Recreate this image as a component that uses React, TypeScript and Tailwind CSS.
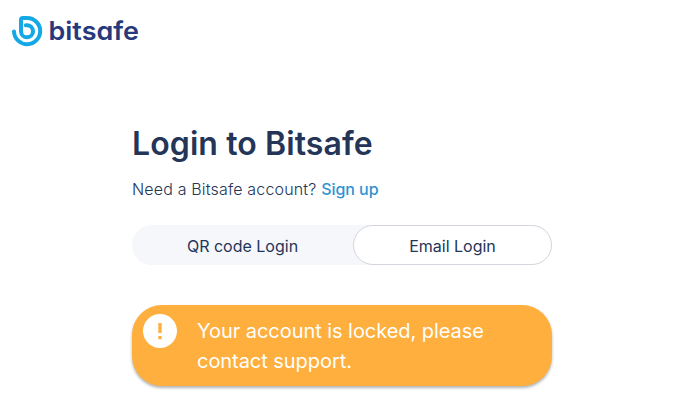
const Logo = () => {
  return (
    <div className="flex items-center gap-[5px] h-8">
      <svg width="33" height="32" viewBox="0 0 33 32" fill="none" stroke="#14a9e6" strokeWidth="4" strokeLinecap="round" strokeLinejoin="round">
        <path d="M3 16.5A13.1 13.1 0 1 0 16 3H12Q10 3 10 5V16.5A6 6 0 1 0 16 10.3H14.8" />
      </svg>
      <svg className="overflow-visible" width="92" height="32" viewBox="0 0 92 32">
        <text
          className="[font-feature-settings:'cv11']"
          x="-0.5"
          y="25"
          textLength="90.5"
          lengthAdjust="spacingAndGlyphs"
          fill="#27397c"
          fontFamily="Inter, sans-serif"
          fontWeight="600"
          fontSize="25"
        >
          bitsafe
        </text>
      </svg>
    </div>
  );
};

const LoginTabs = () => {
  return (
    <div className="mt-6 flex h-10 rounded-full bg-[#f5f7fb] text-base">
      <button className="w-[221px] pt-0.5">QR code Login</button>
      <button className="w-[199px] pt-0.5 rounded-full border border-[#d3d6dc] bg-white">
        Email Login
      </button>
    </div>
  );
};

const LockedAlert = () => {
  return (
    <div className="mt-10 flex h-[81px] rounded-[30px] bg-[#ffaf3d] pl-[11px] pt-[9px] shadow-[0_2px_3px_rgba(0,0,0,0.3)]">
      <svg className="shrink-0" width="34" height="34" viewBox="0 0 34 34">
        <circle cx="17" cy="17" r="17" fill="#fff" />
        <path d="M15.3 9h3.4v10h-3.4zM15.3 22h3.4v3.3h-3.4z" fill="#ffaf3d" />
      </svg>
      <p className="ml-5 mt-[2px] w-[310px] text-[20px] leading-[30px] tracking-[-0.05px] text-white">
        Your account is locked, please contact support.
      </p>
    </div>
  );
};

const App = () => {
  return (
    <div className="h-[419px] overflow-hidden bg-white font-['Inter',sans-serif] text-[#243558]">
      <header className="pl-[11px] pt-[15px]">
        <Logo />
      </header>
      <main className="ml-[132px] mt-[77px] w-[420px]">
        <h1 className="text-[32px] leading-10 font-semibold tracking-[0.1px]">Login to Bitsafe</h1>
        <p className="mt-[13px] text-base leading-6 font-light tracking-[0.17px]">
          Need a Bitsafe account?{" "}
          <a className="font-medium tracking-[-0.05px] text-[#2f93d1]">Sign up</a>
        </p>
        <LoginTabs />
        <LockedAlert />
      </main>
    </div>
  );
};

export default App;
